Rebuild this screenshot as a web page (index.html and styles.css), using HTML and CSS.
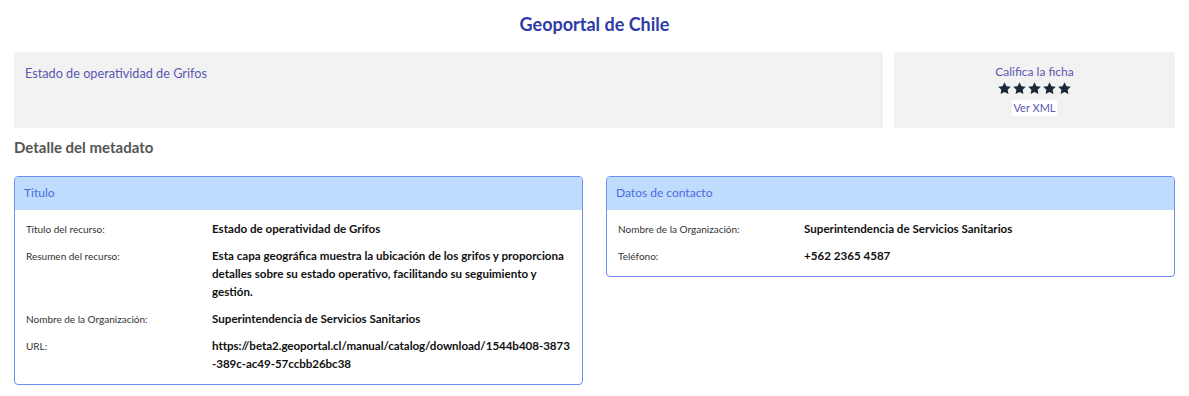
FILE: index.html
```html
<!DOCTYPE html>
<html lang="es">
<head>
<meta charset="utf-8">
<title>Geoportal de Chile</title>
<link rel="stylesheet" href="styles.css">
</head>
<body>
<div class="page">
  <h1 class="site-title">Geoportal de Chile</h1>
  <div class="top-row">
    <div class="panel panel-title">Estado de operatividad de Grifos</div>
    <div class="panel panel-rate">
      <div class="rate-label">Califica la ficha</div>
      <div class="stars">
        <svg viewBox="0 0 24 24" class="star"><path d="M12 1.8l3.1 6.4 7 .9-5.1 4.9 1.3 6.9L12 17.5l-6.3 3.4 1.3-6.9-5.1-4.9 7-.9z"/></svg>
        <svg viewBox="0 0 24 24" class="star"><path d="M12 1.8l3.1 6.4 7 .9-5.1 4.9 1.3 6.9L12 17.5l-6.3 3.4 1.3-6.9-5.1-4.9 7-.9z"/></svg>
        <svg viewBox="0 0 24 24" class="star"><path d="M12 1.8l3.1 6.4 7 .9-5.1 4.9 1.3 6.9L12 17.5l-6.3 3.4 1.3-6.9-5.1-4.9 7-.9z"/></svg>
        <svg viewBox="0 0 24 24" class="star"><path d="M12 1.8l3.1 6.4 7 .9-5.1 4.9 1.3 6.9L12 17.5l-6.3 3.4 1.3-6.9-5.1-4.9 7-.9z"/></svg>
        <svg viewBox="0 0 24 24" class="star"><path d="M12 1.8l3.1 6.4 7 .9-5.1 4.9 1.3 6.9L12 17.5l-6.3 3.4 1.3-6.9-5.1-4.9 7-.9z"/></svg>
      </div>
      <a class="xml-link" href="#">Ver XML</a>
    </div>
  </div>
  <h2 class="section-title">Detalle del metadato</h2>
  <div class="cards">
    <div class="card">
      <div class="card-header">Titulo</div>
      <div class="card-body">
        <div class="row"><div class="label">Título del recurso:</div><div class="value">Estado de operatividad de Grifos</div></div>
        <div class="row"><div class="label">Resumen del recurso:</div><div class="value">Esta capa geográfica muestra la ubicación de los grifos y proporciona detalles sobre su estado operativo, facilitando su seguimiento y gestión.</div></div>
        <div class="row"><div class="label">Nombre de la Organización:</div><div class="value">Superintendencia de Servicios Sanitarios</div></div>
        <div class="row"><div class="label">URL:</div><div class="value value-url">https://beta2.geoportal.cl/manual/catalog/download/1544b408-3873-389c-ac49-57ccbb26bc38</div></div>
      </div>
    </div>
    <div class="card">
      <div class="card-header">Datos de contacto</div>
      <div class="card-body">
        <div class="row"><div class="label">Nombre de la Organización:</div><div class="value">Superintendencia de Servicios Sanitarios</div></div>
        <div class="row"><div class="label">Teléfono:</div><div class="value">+562 2365 4587</div></div>
      </div>
    </div>
  </div>
</div>
</body>
</html>
```
FILE: styles.css
```css
* { box-sizing: border-box; }
body {
  margin: 0;
  background: #ffffff;
  font-family: Lato, "Noto Sans", sans-serif;
  color: #222;
}
.page {
  padding: 12px 14px 0 14px;
}
.site-title {
  margin: 0;
  text-align: center;
  font-size: 18px;
  line-height: 24px;
  font-weight: 700;
  color: #2e3aa6;
}
.top-row {
  margin-top: 16px;
  display: grid;
  grid-template-columns: 1fr 281px;
  gap: 11px;
}
.panel {
  background: #f2f2f2;
  height: 76px;
}
.panel-title {
  padding: 12px 11px;
  font-size: 12.7px;
  line-height: 18px;
  color: #5b57b0;
}
.panel-rate {
  display: flex;
  flex-direction: column;
  align-items: center;
  padding-top: 12px;
}
.rate-label {
  font-size: 12px;
  line-height: 16px;
  color: #5b57b0;
}
.stars {
  display: flex;
  gap: 0;
  height: 16px;
  align-items: center;
}
.star {
  width: 15px;
  height: 15px;
  fill: #1c2738;
}
.xml-link {
  margin-top: 4px;
  background: #ffffff;
  padding: 0 1px;
  font-size: 11px;
  line-height: 16px;
  color: #5b57b0;
  text-decoration: none;
}
.section-title {
  margin: 9px 0 0 0;
  font-size: 15px;
  line-height: 20px;
  font-weight: 700;
  color: #555555;
}
.cards {
  margin-top: 19px;
  display: grid;
  grid-template-columns: 1fr 1fr;
  gap: 23px;
  align-items: start;
}
.card {
  border: 1px solid #6d8ff0;
  border-radius: 4px;
  overflow: hidden;
}
.card-header {
  background: #bfdbfe;
  height: 33px;
  padding: 7px 9px;
  font-size: 12px;
  line-height: 17px;
  color: #4a6be0;
}
.card-body {
  padding: 10px 9px 11px 11px;
  display: flex;
  flex-direction: column;
  gap: 9px;
}
.row {
  display: grid;
  grid-template-columns: 186px 1fr;
}
.label {
  font-size: 10px;
  line-height: 18px;
  color: #333333;
}
.value {
  font-size: 11.6px;
  line-height: 18px;
  font-weight: 700;
  color: #111111;
}
.value-url {
  word-break: break-all;
  letter-spacing: -0.06px;
}
```
